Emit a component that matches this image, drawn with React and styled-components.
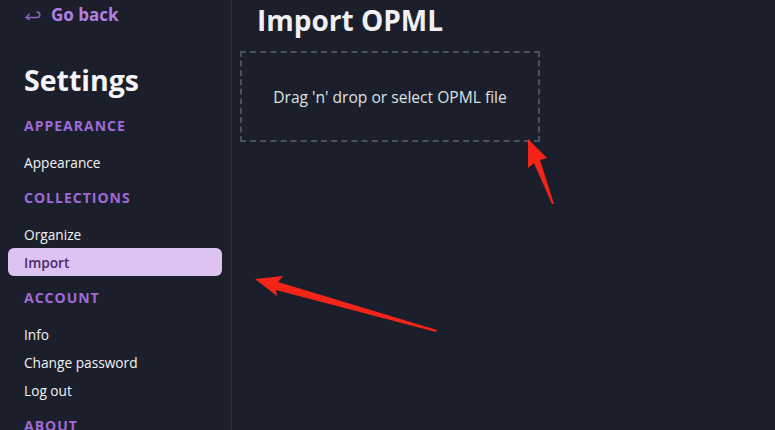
import React from 'react'
import styled, { createGlobalStyle } from 'styled-components'

const GlobalStyle = createGlobalStyle`
  html, body {
    margin: 0;
    padding: 0;
    background: #1b1f2b;
    font-family: "Open Sans", "Noto Sans", sans-serif;
    color: #f1f1f4;
  }
  * { box-sizing: border-box; }
`;

const sections = [
  { title: 'Appearance', items: ['Appearance'] },
  { title: 'Collections', items: ['Organize', 'Import'] },
  { title: 'Account', items: ['Info', 'Change password', 'Log out'] },
  { title: 'About', items: [] },
];

const BackArrow = () => (
  <svg width="17" height="11" viewBox="0 0 17 11" fill="none" stroke="#8f66bd" strokeWidth="1.5" strokeLinecap="round" strokeLinejoin="round">
    <path d="M1 8.5h11a2.8 2.8 0 0 0 0-5.6" />
    <path d="M4.3 5.2L1 8.5l3.3 2.2" />
  </svg>
);

const Annotations = () => (
  <Overlay width="775" height="430" viewBox="0 0 775 430">
    <polygon fill="#f42518" points="255,279 283,276 278,282 437,330 436,332 276,290 277,296" />
    <polygon fill="#f42518" points="528,139 547,158 540,160 554,204 552,204 534,163 528,168" />
  </Overlay>
);

const App = () => {
  return (
    <Page>
      <GlobalStyle />
      <Sidebar>
        <GoBack>
          <BackArrow />
          <span>Go back</span>
        </GoBack>
        <Heading>Settings</Heading>
        {sections.map((section) => (
          <Section key={section.title}>
            <SectionTitle>{section.title}</SectionTitle>
            {section.items.map((item) => (
              <NavItem key={item} $active={item === 'Import'}>{item}</NavItem>
            ))}
          </Section>
        ))}
      </Sidebar>
      <Main>
        <Title>Import OPML</Title>
        <DropZone>Drag 'n' drop or select OPML file</DropZone>
      </Main>
      <Annotations />
    </Page>
  )
}

export default App;

const Page = styled.div`
  position: relative;
  display: flex;
  height: 430px;
  overflow: hidden;
`;

const Sidebar = styled.nav`
  width: 232px;
  flex-shrink: 0;
  padding: 3px 9px 0 8px;
  border-right: 1px solid #2d3140;
  display: flex;
  flex-direction: column;
`;

const GoBack = styled.div`
  display: flex;
  align-items: center;
  gap: 9px;
  height: 28px;
  padding-left: 17px;
  font-size: 17px;
  font-weight: 700;
  color: #b27fe3;
`;

const Heading = styled.h1`
  margin: 34px 0 4px 16px;
  font-size: 28.5px;
  line-height: 40px;
  font-weight: 700;
  color: #f5f5f7;
`;

const Section = styled.div`
  display: flex;
  flex-direction: column;
`;

const SectionTitle = styled.h2`
  margin: 8px 0;
  padding-left: 16px;
  font-size: 14px;
  line-height: 28px;
  font-weight: 700;
  letter-spacing: 1px;
  text-transform: uppercase;
  color: #a06ad9;
`;

const NavItem = styled.a`
  display: flex;
  align-items: center;
  height: 28px;
  padding-left: 16px;
  border-radius: 6px;
  font-size: 13.7px;
  font-weight: ${({ $active }) => ($active ? 600 : 400)};
  color: ${({ $active }) => ($active ? '#4b2a6e' : '#f3f3f5')};
  background: ${({ $active }) => ($active ? '#dcc3f1' : 'transparent')};
  cursor: pointer;
`;

const Main = styled.main`
  flex: 1;
  padding: 0 8px;
`;

const Title = styled.h1`
  margin: 0 0 11px 17px;
  font-size: 28px;
  line-height: 40px;
  font-weight: 700;
  color: #f0f0f3;
`;

const DropZone = styled.div`
  width: 300px;
  height: 91px;
  display: flex;
  align-items: center;
  justify-content: center;
  border: 2px dashed #4a505e;
  font-size: 15.6px;
  color: #dfe0e4;
`;

const Overlay = styled.svg`
  position: absolute;
  top: 0;
  left: 0;
  pointer-events: none;
`;
